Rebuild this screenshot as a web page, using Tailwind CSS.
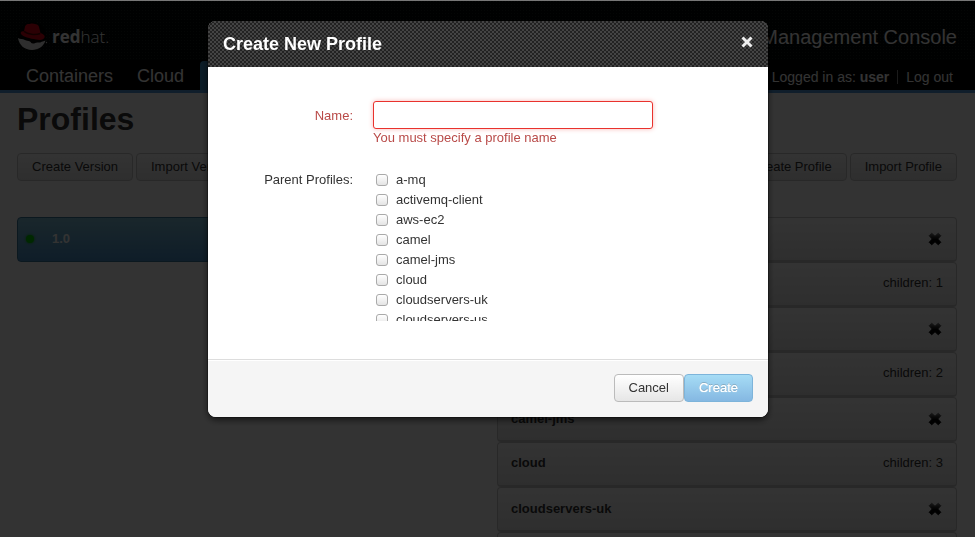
<!DOCTYPE html>
<html lang="en">
<head>
<meta charset="utf-8">
<meta name="viewport" content="width=device-width, initial-scale=1">
<title>Management Console</title>
<script src="https://cdn.jsdelivr.net/npm/@tailwindcss/browser@4"></script>
</head>
<body class="h-screen overflow-hidden bg-white font-['Liberation_Sans',Arial,sans-serif] text-[13px] leading-5 text-[#333]">

<svg class="absolute size-0" aria-hidden="true">
  <defs>
    <linearGradient id="xg" x1="0" y1="0" x2="0" y2="1">
      <stop offset="0" stop-color="#777"/><stop offset="0.55" stop-color="#000"/>
    </linearGradient>
    <symbol id="cross" viewBox="0 0 14 14">
      <path d="M3.700 1.200 7 4.300 10.300 1.200 12.800 3.700 9.700 7 12.800 10.300 10.300 12.800 7 9.700 3.700 12.800 1.200 10.300 4.300 7 1.200 3.700Z" fill="url(#xg)" stroke="url(#xg)" stroke-width="1" stroke-linejoin="round"/>
    </symbol>
  </defs>
</svg>

<div class="h-full overflow-hidden">
  <header class="border-b-3 border-[#5098d8] bg-black">
    <div class="flex h-[60px] items-center justify-between bg-[#040806] bg-[radial-gradient(#181f1b_1px,transparent_1px)] bg-[size:3px_3px] px-[18px] pt-3.5">
      <a href="#" class="flex items-center gap-1 text-white" aria-label="Red Hat">
        <svg class="size-[30px]" viewBox="0 0 30 30" aria-hidden="true">
          <circle cx="14" cy="14" r="14" fill="#000"/>
          <path d="M0 16C2 17.500 4.500 16.500 7 18C8.500 19 10 18.500 12 19.500C13.500 20.500 13 21.500 15 21.500C17 21.500 18 20 20 20.500C22 21 24 19.500 27.500 18.500C25.500 24.500 20.500 28 14 28C6.500 28 1 23 0 16Z" fill="#e5e5e5"/>
          <path d="M7 4.500C8 2 10 1.800 12 2C14 1 16 2 18 2.300C20.500 2.800 21 4.500 21.500 7L22.500 11C25 12 27 13 26.700 15C26 18 22 18.500 18 17.500C12 16.500 5 15 3 12C2 9.500 4 8.800 6 9.300Z" fill="#d80014"/>
          <path d="M6 9.300C10 12.500 17 13.500 22.300 11.500" fill="none" stroke="#500" stroke-width="1.500"/>
          <circle cx="28.500" cy="20.500" r=".7" fill="#ccc"/>
        </svg>
        <span class="font-['Open_Sans',sans-serif] text-[17px] font-light"><b class="font-bold">red</b>hat.</span>
      </a>
      <div class="text-xl text-white">JBoss Fuse Management Console</div>
    </div>
    <div class="flex h-[30px] items-stretch justify-between pr-[22px] pl-[14px]">
      <nav class="flex text-lg text-white">
        <a href="#" class="px-3 pt-0.5">Containers</a>
        <a href="#" class="px-3 pt-0.5">Cloud</a>
        <a href="#" class="mt-px ml-1 rounded-t bg-[#3a8cc0] px-3 pt-px">Profiles</a>
      </nav>
      <div class="flex items-center gap-2 pt-1 text-sm text-white">
        <span>Logged in as: <b>user</b></span><span class="h-3.5 w-px bg-[#888]"></span><a href="#">Log out</a>
      </div>
    </div>
  </header>

  <main class="pr-[18px] pl-[17px]">
    <h1 class="pt-1.5 text-[32px] leading-10 font-bold">Profiles</h1>
    <div class="mt-[14px] flex justify-between">
      <div class="flex gap-[3px]">
        <button class="h-7 rounded border border-[#c8c8c8] bg-linear-to-b from-white to-[#e6e6e6] px-3.5">Create Version</button>
        <button class="h-7 rounded border border-[#c8c8c8] bg-linear-to-b from-white to-[#e6e6e6] px-3.5">Import Version</button>
      </div>
      <div class="flex gap-[3px]">
        <button class="h-7 rounded border border-[#c8c8c8] bg-linear-to-b from-white to-[#e6e6e6] px-3.5">Create Profile</button>
        <button class="h-7 rounded border border-[#c8c8c8] bg-linear-to-b from-white to-[#e6e6e6] px-3.5">Import Profile</button>
      </div>
    </div>
    <div class="mt-9 grid grid-cols-2 items-start gap-5">
      <ul>
        <li class="flex h-[45px] items-center gap-[18px] rounded border border-[#37779c] bg-linear-to-b from-[#80c0d6] to-[#4a90c8] px-2 pb-0.5 font-bold text-white">
          <span class="size-2 rounded-full bg-[#00c800] shadow-[0_0_3px_#0a0]"></span>1.0
        </li>
      </ul>
      <ul>
        <li class="flex h-[45px] items-center justify-between rounded border border-b-2 border-[#c8c8c8] bg-linear-to-b from-white to-[#e6e6e6] px-3.5"><b>a-mq</b><button aria-label="Delete a-mq"><svg class="size-[14px]"><use href="#cross"/></svg></button></li>
        <li class="flex h-[45px] items-center justify-between rounded border border-b-2 border-[#c8c8c8] bg-linear-to-b from-white to-[#e6e6e6] px-[13px] pb-0.5"><b>activemq-client</b><span>children: 1</span></li>
        <li class="flex h-[45px] items-center justify-between rounded border border-b-2 border-[#c8c8c8] bg-linear-to-b from-white to-[#e6e6e6] pr-3.5 pl-[13px]"><b>aws-ec2</b><button aria-label="Delete aws-ec2"><svg class="size-[14px]"><use href="#cross"/></svg></button></li>
        <li class="flex h-[45px] items-center justify-between rounded border border-b-2 border-[#c8c8c8] bg-linear-to-b from-white to-[#e6e6e6] px-[13px] pb-0.5"><b>camel</b><span>children: 2</span></li>
        <li class="flex h-[45px] items-center justify-between rounded border border-b-2 border-[#c8c8c8] bg-linear-to-b from-white to-[#e6e6e6] pr-3.5 pl-[13px]"><b>camel-jms</b><button aria-label="Delete camel-jms"><svg class="size-[14px]"><use href="#cross"/></svg></button></li>
        <li class="flex h-[45px] items-center justify-between rounded border border-b-2 border-[#c8c8c8] bg-linear-to-b from-white to-[#e6e6e6] px-[13px] pb-0.5"><b>cloud</b><span>children: 3</span></li>
        <li class="flex h-[45px] items-center justify-between rounded border border-b-2 border-[#c8c8c8] bg-linear-to-b from-white to-[#e6e6e6] pr-3.5 pl-[13px]"><b>cloudservers-uk</b><button aria-label="Delete cloudservers-uk"><svg class="size-[14px]"><use href="#cross"/></svg></button></li>
        <li class="flex h-[45px] items-center justify-between rounded border border-b-2 border-[#c8c8c8] bg-linear-to-b from-white to-[#e6e6e6] px-[13px]"><b>cloudservers-us</b></li>
      </ul>
    </div>
  </main>
</div>

<div class="fixed inset-0 flex items-start justify-center border-t border-[#777] bg-black/80 pt-5 pl-px">
  <form role="dialog" aria-labelledby="dlg-title" class="w-[560px] overflow-hidden rounded-lg bg-white shadow-[0_3px_7px_rgba(0,0,0,0.6),0_0_0_1px_rgba(0,0,0,0.3)]">
    <div class="flex h-[46px] items-center justify-between bg-[#222] bg-[repeating-conic-gradient(#444_0_25%,#222_0_50%)] bg-[size:4px_4px] px-[15px]">
      <h2 id="dlg-title" class="text-lg font-bold text-white">Create New Profile</h2>
      <button type="button" aria-label="Close" class="pb-1"><svg class="size-3" viewBox="0 0 12 12" aria-hidden="true"><path d="M1.500 1.500 10.500 10.500M10.500 1.500 1.500 10.500" stroke="#eee" stroke-width="3"/></svg></button>
    </div>
    <div class="h-[292px] pt-[34px]">
      <div class="grid grid-cols-[145px_280px] gap-x-5 text-[#b94a48]">
        <label for="name" class="pt-[5px] text-right">Name:</label>
        <div>
          <input id="name" type="text" class="block h-7 w-full rounded-[3px] border border-[#e9322d] bg-white px-1.5 shadow-[0_0_5px_#f8b9b7] outline-none">
          <p class="-mt-px">You must specify a profile name</p>
        </div>
      </div>
      <fieldset class="mt-[22px] grid grid-cols-[145px_280px] gap-x-5" aria-labelledby="parents">
        <span id="parents" class="text-right">Parent Profiles:</span>
        <div class="h-[151px] overflow-y-auto pl-[3px] [scrollbar-width:none]">
          <label class="flex items-center gap-2"><input type="checkbox" class="size-3 appearance-none rounded-[3px] border border-[#aaa] bg-linear-to-b from-white to-[#e4e4e4]">a-mq</label>
          <label class="flex items-center gap-2"><input type="checkbox" class="size-3 appearance-none rounded-[3px] border border-[#aaa] bg-linear-to-b from-white to-[#e4e4e4]">activemq-client</label>
          <label class="flex items-center gap-2"><input type="checkbox" class="size-3 appearance-none rounded-[3px] border border-[#aaa] bg-linear-to-b from-white to-[#e4e4e4]">aws-ec2</label>
          <label class="flex items-center gap-2"><input type="checkbox" class="size-3 appearance-none rounded-[3px] border border-[#aaa] bg-linear-to-b from-white to-[#e4e4e4]">camel</label>
          <label class="flex items-center gap-2"><input type="checkbox" class="size-3 appearance-none rounded-[3px] border border-[#aaa] bg-linear-to-b from-white to-[#e4e4e4]">camel-jms</label>
          <label class="flex items-center gap-2"><input type="checkbox" class="size-3 appearance-none rounded-[3px] border border-[#aaa] bg-linear-to-b from-white to-[#e4e4e4]">cloud</label>
          <label class="flex items-center gap-2"><input type="checkbox" class="size-3 appearance-none rounded-[3px] border border-[#aaa] bg-linear-to-b from-white to-[#e4e4e4]">cloudservers-uk</label>
          <label class="flex items-center gap-2"><input type="checkbox" class="size-3 appearance-none rounded-[3px] border border-[#aaa] bg-linear-to-b from-white to-[#e4e4e4]">cloudservers-us</label>
        </div>
      </fieldset>
    </div>
    <div class="flex justify-end border-t border-[#ddd] bg-[#f5f5f5] px-[15px] pt-3.5 pb-[15px] shadow-[inset_0_1px_0_#fff]">
      <button type="button" class="h-7 rounded border border-[#bbb] bg-linear-to-b from-white to-[#e6e6e6] px-3.5">Cancel</button>
      <button type="submit" disabled class="h-7 rounded border border-[#7db4da] bg-linear-to-b from-[#a6dcf5] to-[#85b8e2] px-3.5 text-white [text-shadow:0_-1px_0_rgba(0,0,0,0.2),0_0_1px_#fff]">Create</button>
    </div>
  </form>
</div>
</body>
</html>
